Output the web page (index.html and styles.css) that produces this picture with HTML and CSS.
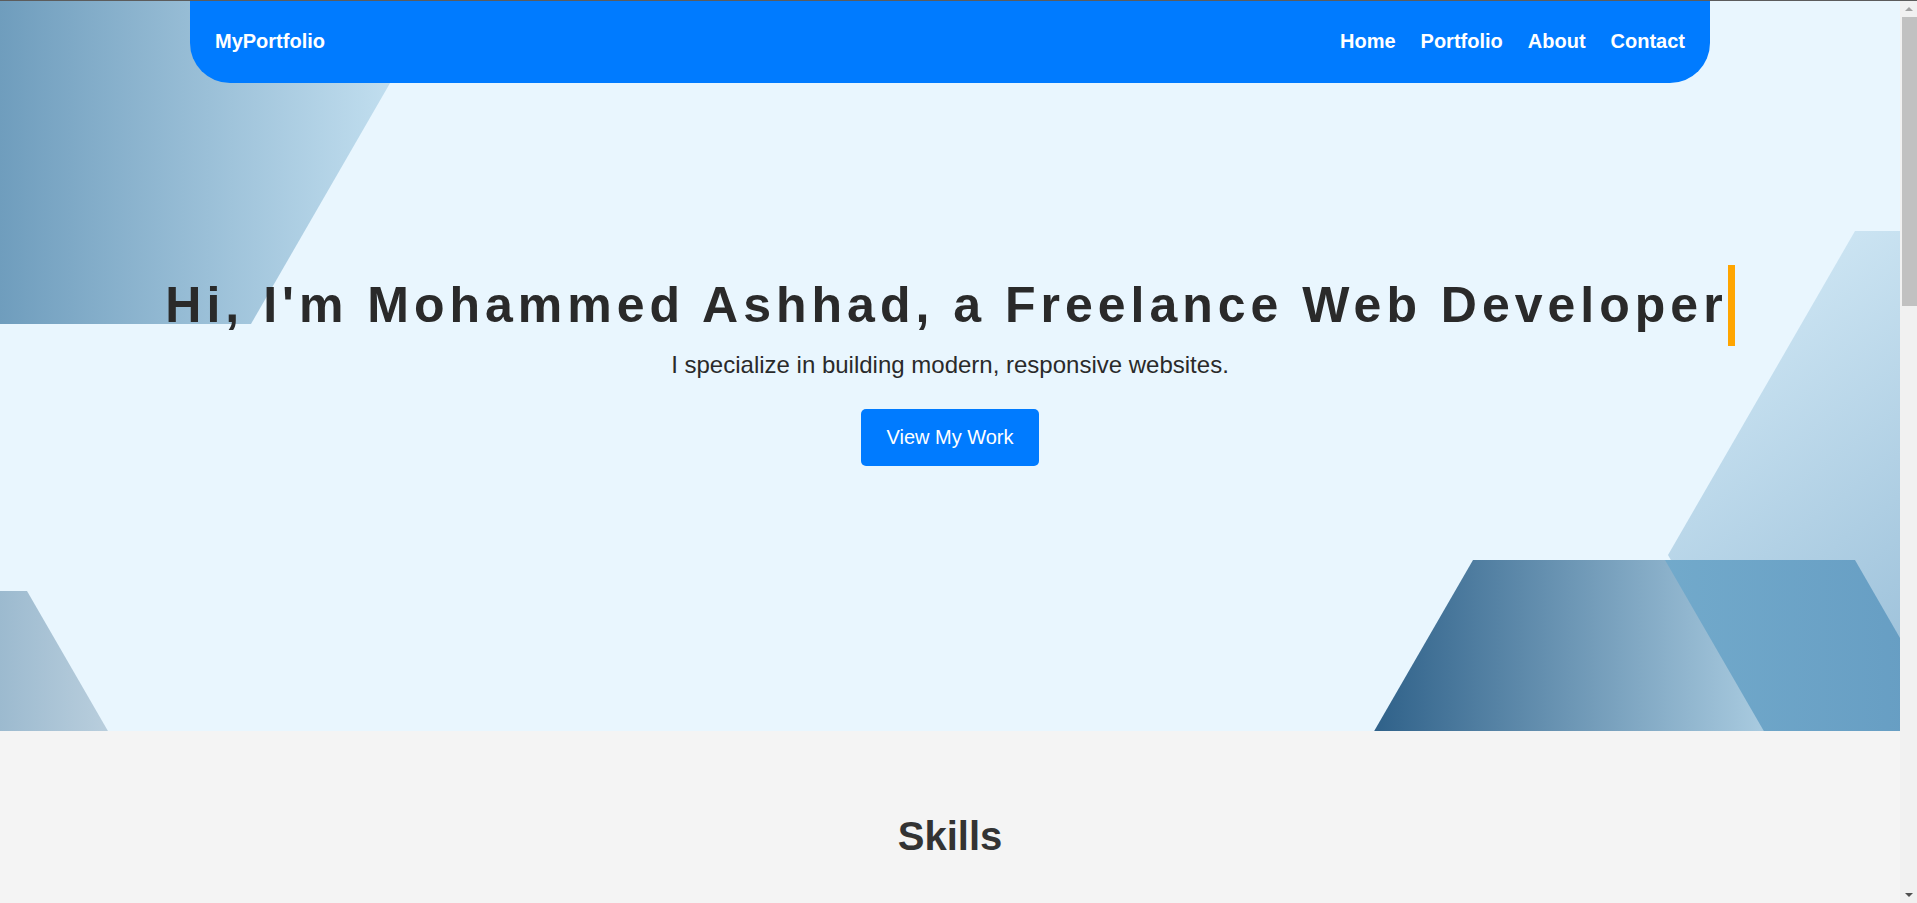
FILE: index.html
```html
<!DOCTYPE html>
<html lang="en">
<head>
<meta charset="utf-8">
<title>MyPortfolio</title>
<link rel="stylesheet" href="styles.css">
</head>
<body>
<div class="window-edge"></div>
<div class="scrollbar" aria-hidden="true">
  <div class="sb-btn"><span class="sb-up"></span></div>
  <div class="sb-thumb"></div>
  <div class="sb-track"></div>
  <div class="sb-btn"><span class="sb-down"></span></div>
</div>

<div class="page">
<header class="navbar">
  <a class="logo" href="#home">MyPortfolio</a>
  <nav class="nav-links">
    <a href="#home">Home</a>
    <a href="#portfolio">Portfolio</a>
    <a href="#about">About</a>
    <a href="#contact">Contact</a>
  </nav>
</header>

<section class="hero" id="home">
  <svg class="hex hex-left" width="460" height="731" viewBox="0 0 460 731" aria-hidden="true">
    <defs>
      <linearGradient id="gD" gradientUnits="userSpaceOnUse" x1="0" y1="0" x2="438" y2="0">
        <stop offset="0" stop-color="#6f9dbd"/>
        <stop offset="1" stop-color="#cbe6f5"/>
      </linearGradient>
      <linearGradient id="gE" gradientUnits="userSpaceOnUse" x1="0" y1="0" x2="123" y2="0">
        <stop offset="0" stop-color="#9cbacf"/>
        <stop offset="1" stop-color="#bdd1df"/>
      </linearGradient>
    </defs>
    <polygon points="-310,0 -123,-324 251,-324 438,0 251,324 -123,324" fill="url(#gD)"/>
    <polygon points="-261,757 -165,591 27,591 123,757 27,923 -165,923" fill="url(#gE)"/>
  </svg>
  <svg class="hex hex-right" width="560" height="731" viewBox="0 0 560 731" aria-hidden="true">
    <defs>
      <linearGradient id="gA" gradientUnits="userSpaceOnUse" x1="360" y1="231" x2="760" y2="760">
        <stop offset="0" stop-color="#d6ecf8"/>
        <stop offset="1" stop-color="#86b0ce"/>
      </linearGradient>
      <linearGradient id="gB" gradientUnits="userSpaceOnUse" x1="37" y1="0" x2="421" y2="0">
        <stop offset="0" stop-color="#30628a"/>
        <stop offset="1" stop-color="#a8cadf"/>
      </linearGradient>
      <linearGradient id="gC" gradientUnits="userSpaceOnUse" x1="227" y1="0" x2="611" y2="0">
        <stop offset="0" stop-color="#76aece"/>
        <stop offset="1" stop-color="#659cc2"/>
      </linearGradient>
    </defs>
    <polygon points="328,555 515,231 889,231 1076,555 889,879 515,879" fill="url(#gA)"/>
    <polygon points="219,740 323,560 515,560 619,740 515,920 323,920" fill="url(#gC)"/>
    <polygon points="29,740 133,560 325,560 429,740 325,920 133,920" fill="url(#gB)"/>
  </svg>

  <div class="hero-content">
    <h1 class="typing">Hi, I'm Mohammed Ashhad, a Freelance Web Developer</h1>
    <p class="tagline">I specialize in building modern, responsive websites.</p>
    <a class="btn" href="#portfolio">View My Work</a>
  </div>
</section>

<section class="skills" id="skills">
  <h2>Skills</h2>
  <div class="skill-list">
    <div class="skill-card">HTML5</div>
    <div class="skill-card">CSS3</div>
    <div class="skill-card">JavaScript</div>
    <div class="skill-card">React</div>
    <div class="skill-card">Node.js</div>
    <div class="skill-card">WordPress</div>
  </div>
</section>

<section class="portfolio" id="portfolio">
  <h2>Portfolio</h2>
  <div class="project-grid">
    <div class="project">
      <div class="project-thumb"></div>
      <h3>Business Website</h3>
      <p>A responsive website for a local business.</p>
    </div>
    <div class="project">
      <div class="project-thumb"></div>
      <h3>E-commerce Store</h3>
      <p>An online store with a modern checkout flow.</p>
    </div>
    <div class="project">
      <div class="project-thumb"></div>
      <h3>Landing Page</h3>
      <p>A high-converting landing page for a product launch.</p>
    </div>
  </div>
</section>

<section class="about" id="about">
  <h2>About Me</h2>
  <p>I'm a freelance web developer who loves turning ideas into clean, fast and accessible websites.</p>
</section>

<section class="contact" id="contact">
  <h2>Contact</h2>
  <form class="contact-form">
    <input type="text" placeholder="Your Name">
    <input type="email" placeholder="Your Email">
    <textarea placeholder="Your Message"></textarea>
    <button type="button" class="btn">Send Message</button>
  </form>
</section>

<footer class="footer">
  <p>&copy; 2024 Mohammed Ashhad. All rights reserved.</p>
</footer>
</div>
</body>
</html>
```

FILE: styles.css
```css
* {
  box-sizing: border-box;
}

html, body {
  margin: 0;
  padding: 0;
}

body {
  font-family: "Liberation Sans", Arial, Helvetica, sans-serif;
  color: #333;
  background: #f4f4f4;
}

/* browser chrome: window edge and classic scrollbar */
.window-edge {
  position: fixed;
  top: 0;
  left: 0;
  right: 0;
  height: 1px;
  background: #5c5c5c;
  z-index: 100;
}

.scrollbar {
  position: fixed;
  top: 0;
  right: 0;
  width: 17px;
  height: 100vh;
  background: #f1f1f1;
  display: flex;
  flex-direction: column;
  align-items: center;
  z-index: 90;
}

.sb-btn {
  width: 17px;
  height: 17px;
  display: flex;
  align-items: center;
  justify-content: center;
}

.sb-up {
  width: 0;
  height: 0;
  border-left: 4px solid transparent;
  border-right: 4px solid transparent;
  border-bottom: 4px solid #a3a3a3;
}

.sb-down {
  width: 0;
  height: 0;
  border-left: 4px solid transparent;
  border-right: 4px solid transparent;
  border-top: 4px solid #505050;
}

.sb-thumb {
  width: 15px;
  height: 289px;
  margin-left: 2px;
  background: #c1c1c1;
}

.sb-track {
  flex: 1;
}

.page {
  position: relative;
  margin-right: 17px;
}

.navbar {
  position: absolute;
  top: 0;
  left: 10%;
  width: 80%;
  z-index: 10;
  display: flex;
  justify-content: space-between;
  align-items: center;
  padding: 30px 25px;
  background: #007bff;
  border-radius: 0 0 40px 40px;
}

.logo {
  color: #fff;
  font-size: 20px;
  font-weight: bold;
  text-decoration: none;
}

.nav-links {
  display: flex;
  gap: 25px;
}

.nav-links a {
  color: #fff;
  font-size: 20px;
  font-weight: bold;
  text-decoration: none;
}

.hero {
  position: relative;
  height: 731px;
  overflow: hidden;
  background: #e9f6fe;
  display: flex;
  align-items: center;
  justify-content: center;
}

.hex {
  position: absolute;
  top: 0;
}

.hex-left {
  left: 0;
}

.hex-right {
  right: 0;
}

.hero-content {
  position: relative;
  display: flex;
  flex-direction: column;
  align-items: center;
  text-align: center;
}

.typing {
  display: inline-block;
  margin: 0;
  font-size: 50px;
  font-weight: bold;
  line-height: 81px;
  letter-spacing: 5px;
  white-space: nowrap;
  color: #2a2a2a;
  border-right: 7px solid #ffa500;
}

.tagline {
  margin: 5px 0 30px;
  font-size: 24px;
  color: #2a2a2a;
}

.btn {
  display: inline-block;
  padding: 17px 25px;
  font-family: inherit;
  font-size: 20px;
  line-height: 23px;
  color: #fff;
  background: #007bff;
  border: none;
  border-radius: 5px;
  text-decoration: none;
}

.skills {
  padding: 50px 20px;
  text-align: center;
  background: #f4f4f4;
}

.skills h2,
.portfolio h2,
.about h2,
.contact h2 {
  font-size: 40px;
  margin: 33px 0;
  color: #333;
}

.skill-list {
  margin-top: 70px;
  display: flex;
  flex-wrap: wrap;
  justify-content: center;
  gap: 20px;
}

.skill-card {
  width: 200px;
  padding: 30px 20px;
  background: #fff;
  border-radius: 10px;
  font-size: 20px;
  font-weight: bold;
  box-shadow: 0 2px 8px rgba(0, 0, 0, 0.08);
}

.portfolio {
  padding: 50px 20px;
  text-align: center;
  background: #e9f6fe;
}

.project-grid {
  display: grid;
  grid-template-columns: repeat(3, 360px);
  justify-content: center;
  gap: 30px;
}

.project {
  background: #fff;
  border-radius: 10px;
  padding: 20px;
  text-align: left;
}

.project-thumb {
  height: 200px;
  border-radius: 6px;
  background: linear-gradient(135deg, #7fb2d3, #2f6188);
}

.project h3 {
  font-size: 22px;
  margin: 16px 0 8px;
}

.project p {
  margin: 0;
  font-size: 16px;
}

.about {
  padding: 50px 20px 80px;
  text-align: center;
  background: #f4f4f4;
  font-size: 20px;
}

.contact {
  padding: 50px 20px 80px;
  text-align: center;
  background: #e9f6fe;
}

.contact-form {
  width: 600px;
  margin: 0 auto;
  display: flex;
  flex-direction: column;
  gap: 15px;
}

.contact-form input,
.contact-form textarea {
  padding: 12px;
  font-family: inherit;
  font-size: 16px;
  border: 1px solid #ccc;
  border-radius: 5px;
}

.contact-form textarea {
  height: 150px;
}

.footer {
  padding: 20px;
  text-align: center;
  background: #333;
  color: #fff;
}
```
